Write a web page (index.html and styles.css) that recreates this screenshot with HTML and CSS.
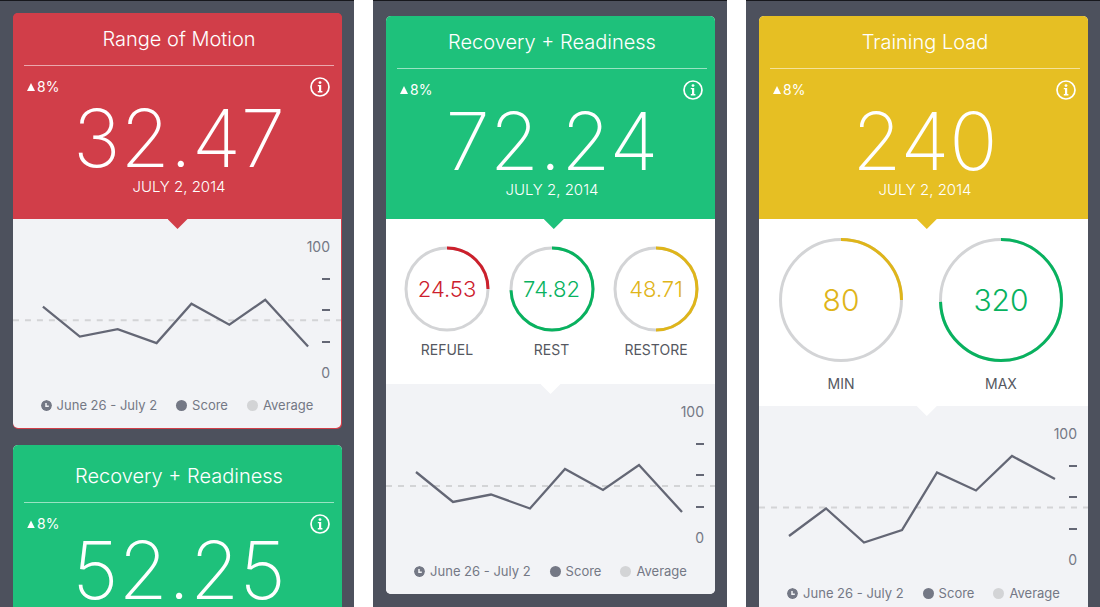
FILE: index.html
```
<!DOCTYPE html>
<html lang="en">
<head>
<meta charset="utf-8">
<title>Athlete dashboard</title>
<link rel="stylesheet" href="styles.css">
</head>
<body>
<svg class="defs" aria-hidden="true">
  <symbol id="info" viewBox="0 0 20 20">
    <circle cx="10" cy="10" r="9" fill="none" stroke="currentColor" stroke-width="1.7"/>
    <circle cx="10" cy="5.6" r="1.4" fill="currentColor"/>
    <path d="M7.8 8h3.4v6.100h1.200v1.300H7.800v-1.300h1.200V9.300H7.800z" fill="currentColor"/>
  </symbol>
  <symbol id="clock" viewBox="0 0 11 11">
    <circle cx="5.5" cy="5.5" r="5.5" fill="#747885"/>
    <path d="M5 2.9v3.3h2.8" fill="none" stroke="#f2f3f6" stroke-width="1.5"/>
  </symbol>
</svg>
<main class="screens">
  <section class="screen">
    <article class="card card--red">
      <header class="head">
        <h2 class="title">Range of Motion</h2>
        <div class="meta"><span class="change"><i class="up"></i>8%</span><button class="info" type="button" aria-label="About Range of Motion"><svg><use href="#info"/></svg></button></div>
        <p class="score">32.47</p>
        <p class="date">JULY 2, 2014</p>
      </header>
      <div class="chart">
        <div class="plot">
          <svg class="lines" viewBox="0 0 329 165" aria-hidden="true"><path class="average" d="M0 101.5H329"/><path class="trend" d="M30 88 67 118 105 110.500 144 124.500 179 85 217 106 253 81 296 128"/></svg>
          <div class="axis"><span>100</span><i></i><i></i><i></i><span>0</span></div>
        </div>
        <ul class="legend"><li><svg class="dot"><use href="#clock"/></svg>June 26 - July 2</li><li><i class="dot dot--score"></i>Score</li><li><i class="dot dot--average"></i>Average</li></ul>
      </div>
    </article>
    <article class="card card--green card--next">
      <header class="head">
        <h2 class="title">Recovery + Readiness</h2>
        <div class="meta"><span class="change"><i class="up"></i>8%</span><button class="info" type="button" aria-label="About Recovery and Readiness"><svg><use href="#info"/></svg></button></div>
        <p class="score">52.25</p>
      </header>
    </article>
  </section>

  <section class="screen screen--detail">
    <article class="card card--green">
      <header class="head">
        <h2 class="title">Recovery + Readiness</h2>
        <div class="meta"><span class="change"><i class="up"></i>8%</span><button class="info" type="button" aria-label="About Recovery and Readiness"><svg><use href="#info"/></svg></button></div>
        <p class="score">72.24</p>
        <p class="date">JULY 2, 2014</p>
      </header>
      <div class="rings">
        <figure class="ring ring--red">
          <div class="dial"><svg viewBox="0 0 86 86"><circle class="track" cx="43" cy="43" r="41"/><circle class="arc" cx="43" cy="43" r="41" pathLength="100" stroke-dasharray="25 100"/></svg><span>24.53</span></div>
          <figcaption>REFUEL</figcaption>
        </figure>
        <figure class="ring ring--green">
          <div class="dial"><svg viewBox="0 0 86 86"><circle class="track" cx="43" cy="43" r="41"/><circle class="arc" cx="43" cy="43" r="41" pathLength="100" stroke-dasharray="74.5 100"/></svg><span>74.82</span></div>
          <figcaption>REST</figcaption>
        </figure>
        <figure class="ring ring--yellow">
          <div class="dial"><svg viewBox="0 0 86 86"><circle class="track" cx="43" cy="43" r="41"/><circle class="arc" cx="43" cy="43" r="41" pathLength="100" stroke-dasharray="50 100"/></svg><span>48.71</span></div>
          <figcaption>RESTORE</figcaption>
        </figure>
      </div>
      <div class="chart">
        <div class="plot">
          <svg class="lines" viewBox="0 0 329 165" aria-hidden="true"><path class="average" d="M0 102H329"/><path class="trend" d="M30 88 67 118 105 110.500 144 124.500 179 85 217 106 253 81 296 128"/></svg>
          <div class="axis"><span>100</span><i></i><i></i><i></i><span>0</span></div>
        </div>
        <ul class="legend"><li><svg class="dot"><use href="#clock"/></svg>June 26 - July 2</li><li><i class="dot dot--score"></i>Score</li><li><i class="dot dot--average"></i>Average</li></ul>
      </div>
    </article>
  </section>

  <section class="screen screen--detail">
    <article class="card card--yellow">
      <header class="head">
        <h2 class="title">Training Load</h2>
        <div class="meta"><span class="change"><i class="up"></i>8%</span><button class="info" type="button" aria-label="About Training Load"><svg><use href="#info"/></svg></button></div>
        <p class="score">240</p>
        <p class="date">JULY 2, 2014</p>
      </header>
      <div class="rings rings--large">
        <figure class="ring ring--yellow">
          <div class="dial"><svg viewBox="0 0 124 124"><circle class="track" cx="62" cy="62" r="60.5"/><circle class="arc" cx="62" cy="62" r="60.5" pathLength="100" stroke-dasharray="25 100"/></svg><span>80</span></div>
          <figcaption>MIN</figcaption>
        </figure>
        <figure class="ring ring--green">
          <div class="dial"><svg viewBox="0 0 124 124"><circle class="track" cx="62" cy="62" r="60.5"/><circle class="arc" cx="62" cy="62" r="60.5" pathLength="100" stroke-dasharray="74.5 100"/></svg><span>320</span></div>
          <figcaption>MAX</figcaption>
        </figure>
      </div>
      <div class="chart">
        <div class="plot">
          <svg class="lines" viewBox="0 0 329 165" aria-hidden="true"><path class="average" d="M0 101.500H329"/><path class="trend" d="M30 130 67 102.500 105 136.500 143 124 178 66.500 217 84.500 253 50 296 73"/></svg>
          <div class="axis"><span>100</span><i></i><i></i><i></i><span>0</span></div>
        </div>
        <ul class="legend"><li><svg class="dot"><use href="#clock"/></svg>June 26 - July 2</li><li><i class="dot dot--score"></i>Score</li><li><i class="dot dot--average"></i>Average</li></ul>
      </div>
    </article>
  </section>
</main>
</body>
</html>
```
FILE: styles.css
```
* { box-sizing: border-box; }
body, h2, p, ul, figure { margin: 0; }
body { background: #fff; font-family: Inter, "Liberation Sans", sans-serif; font-size: 14px; }
ul { padding: 0; list-style: none; }
.defs { display: none; }

.screens { display: grid; grid-template-columns: repeat(3, minmax(0, 1fr)); gap: 19px; height: 100vh; overflow: hidden; }
.screen { display: flex; flex-direction: column; gap: 16px; padding: 12px 12px 0 13px; border-top: 1px solid #17181d; background: #4d515d; overflow: hidden; }
.screen--detail { padding-top: 15px; }

.card { flex: none; border-radius: 5px; background: #fff; overflow: hidden; }
.card--red { --tone: #d13e49; background: var(--tone); }
.card--green { --tone: #1ec17b; }
.card--yellow { --tone: #e6bf23; }

.head { position: relative; padding: 0 8px 22px 11px; background: var(--tone); color: #fff; text-align: center; }
.screen--detail .head { padding-bottom: 19px; }
.head::after, .rings::after { content: ""; position: absolute; z-index: 1; top: 100%; left: 50%; width: 20px; height: 10px; margin-left: -10px; background: var(--tone); clip-path: polygon(0 0, 100% 0, 50% 100%); }
.screen--detail .head::after, .card--yellow .rings::after { left: 51%; }
.title { border-bottom: 1px solid rgba(255, 255, 255, .55); font-size: 20px; font-weight: 300; line-height: 52px; }
.meta { display: flex; justify-content: space-between; align-items: center; padding: 11px 4px 0 3px; }
.change { display: flex; align-items: center; gap: 2px; line-height: 20px; }
.up { width: 8px; height: 8px; background: #fff; clip-path: polygon(50% 0, 100% 100%, 0 100%); }
.info { width: 20px; height: 20px; padding: 0; border: 0; background: none; color: inherit; }
.info svg { display: block; width: 20px; height: 20px; }
.score { margin-top: 5px; font-size: 80px; font-weight: 200; line-height: 72px; }
.date { margin-top: 3px; font-size: 15px; font-weight: 300; line-height: 20px; }
.card--next .title { padding-top: 5px; }
.card--next .score { margin-top: 0; }

.rings { position: relative; display: flex; justify-content: space-between; padding: 27px 16px 24px 18px; background: #fff; --tone: #fff; }
.rings--large { padding: 19px 25px 12px 20px; }
.dial { display: grid; place-items: center; width: 86px; height: 86px; color: var(--ink); font-size: 22px; font-weight: 300; }
.rings--large .dial { width: 124px; height: 124px; font-size: 30px; }
.dial > * { grid-area: 1 / 1; }
.dial svg { width: 100%; height: 100%; transform: rotate(-90deg); }
.track, .arc { fill: none; stroke: #d3d4d6; stroke-width: 3; }
.arc { stroke: var(--ink); }
.ring { text-align: center; }
.ring figcaption { margin-top: 8px; line-height: 20px; color: #555861; }
.rings--large figcaption { margin-top: 12px; }
.ring--red { --ink: #cc202c; }
.ring--green { --ink: #08b25f; }
.ring--yellow { --ink: #dfb51a; }

.chart { padding-bottom: 13px; background: #f2f3f6; color: #747885; font-size: 13px; }
.card--red .chart { margin: 0 1px 1px 0; border-radius: 0 0 5px 5px; }
.plot { display: grid; }
.plot > * { grid-area: 1 / 1; }
.lines { width: 100%; }
.average, .trend { fill: none; stroke-width: 2; }
.average { stroke: #d3d4d6; stroke-dasharray: 6 6; }
.trend { stroke: #646775; stroke-width: 2.3; }
.axis { justify-self: end; display: flex; flex-direction: column; justify-content: space-between; align-items: flex-end; height: 146px; margin-top: 18px; padding-right: 11px; font-size: 14px; line-height: 20px; }
.axis i { width: 8px; height: 20px; background: linear-gradient(#646775, #646775) center / 8px 2px no-repeat; }
.legend { display: flex; justify-content: center; gap: 19px; padding-top: 12px; line-height: 20px; }
.legend li { display: flex; align-items: center; gap: 5px; }
.dot { width: 11px; height: 11px; border-radius: 50%; }
.dot--score { background: #747885; }
.dot--average { background: #d3d4d6; }
```
